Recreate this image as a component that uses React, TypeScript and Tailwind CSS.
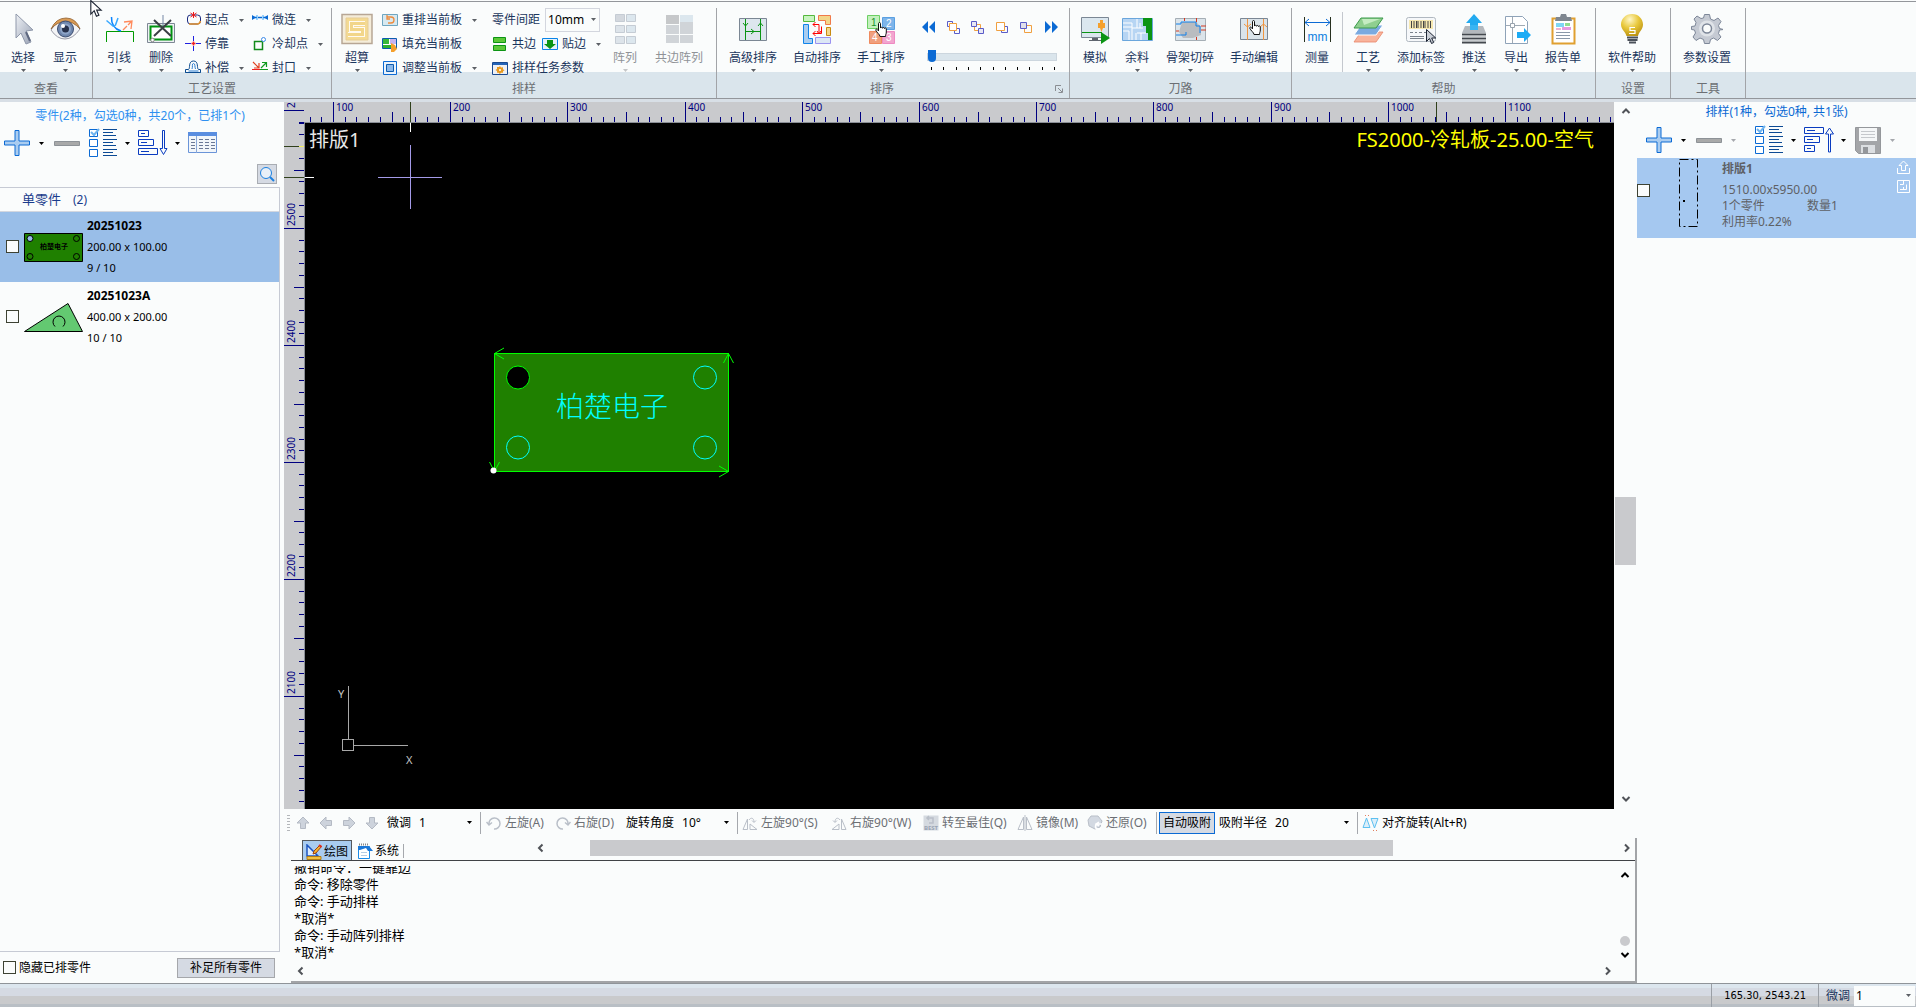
import React from 'react';

const S = ({ size = 32, children }: { size?: number; children: React.ReactNode }) => (
  <svg width={size} height={size} viewBox={`0 0 ${size} ${size}`} fill="none" className="shrink-0" aria-hidden="true">
    {children}
  </svg>
);

const Caret = ({ color = '#5c6066', className = '' }: { color?: string; className?: string }) => (
  <svg width="5" height="3" viewBox="0 0 5 3" className={`shrink-0 ${className}`} aria-hidden="true">
    <path d="M0 0h5L2.5 3z" fill={color} />
  </svg>
);

const Hand = ({ x, y }: { x: number; y: number }) => (
  <g transform={`translate(${x} ${y})`}>
    <path
      d="M3.5 1.5c0-1.3 2-1.3 2 0V6c0-1 2-1 2 .2 0-1 2-1 2 .3 0-.9 1.8-.8 1.8.4V10c0 2-.8 2.500-.8 4.500H5C5 12.500 1.500 10.500.8 8.200.5 7 1.800 6.800 2.500 7.700l1 1.200z"
      fill="#fff"
      stroke="#111"
      strokeWidth="1"
    />
  </g>
);

const Pointer = ({ x, y, fill = '#fff' }: { x: number; y: number; fill?: string }) => (
  <path transform={`translate(${x} ${y})`} d="M.5.500v12l3-3 2 5 2.200-1-2-4.500h4z" fill={fill} stroke="#1c2433" strokeWidth="1" />
);

/* ---- large ribbon icons, 32 x 32 ---- */
const big = {
  select: (
    <S>
      <defs>
        <linearGradient id="arrowFill" x1="0" y1="0" x2="1" y2="1">
          <stop offset="0" stopColor="#eef1f5" />
          <stop offset="1" stopColor="#98a1b4" />
        </linearGradient>
      </defs>
      <path d="M9 1v24l5-5 5 11 5-2-5-11 7-1z" fill="url(#arrowFill)" stroke="#8f98aa" />
      <path d="M19 19l4 9" stroke="#5e6880" strokeWidth="2" />
    </S>
  ),
  eye: (
    <S>
      <path d="M2 17Q8 7 17 7t14 9Q24 26 16 26T2 17z" fill="#f3f4f6" stroke="#9a9ca8" />
      <path d="M2 16Q7 5 17 5t14 11Q24 8 16 8.500T2 16z" fill="#d99b55" stroke="#8f6030" strokeWidth=".8" />
      <circle cx="16.500" cy="16" r="8" fill="#6f87ad" stroke="#3c4d70" />
      <circle cx="16.500" cy="16" r="5.500" fill="#8ea5c8" />
      <circle cx="16.500" cy="16" r="3.500" fill="#26304a" />
      <circle cx="14" cy="13" r="2" fill="#fff" />
    </S>
  ),
  lead: (
    <S>
      <path d="M3.500 29V18.500h27V29" stroke="#009a00" />
      <path d="M8.500 4Q8 15 18 18" stroke="#0a84ff" strokeWidth="1.500" />
      <path d="M3.500 7.500l7 6M15 5l-2.500 7-2 1.500" stroke="#38a8ff" strokeWidth="1.500" />
      <path d="M20 17l4-4m1-1l3-3M21 9l8-1-1 8" stroke="#ff8a5c" strokeWidth="1.300" />
    </S>
  ),
  remove: (
    <S>
      <path d="M2.500 10.500h27v19h-27z" fill="#eef1f4" stroke="#7d8794" />
      <path d="M5.500 13.500h21v13h-21z" fill="#fff" stroke="#009410" strokeWidth="2" />
      <path d="M18 2v14" stroke="#7587a5" />
      <path d="M9 7l17 16M26 7L9 23" stroke="#3b3f45" strokeWidth="2" />
      <circle cx="7.500" cy="27" r="1.800" fill="#fff" stroke="#888" />
    </S>
  ),
  nest: (
    <S>
      <path d="M1 1.500h30v29H1z" fill="#f4ecd9" stroke="#b7a695" strokeWidth="1.500" />
      <path d="M5 5h22v22H5z" fill="#f4da92" stroke="#e6cd96" />
      <path d="M24 10.500H10.500v6h11v5H7" stroke="#fffaf0" strokeWidth="5" />
      <path d="M24 10.500H10.500v6h11v5H7" stroke="#f2d68a" strokeWidth="3" />
    </S>
  ),
  array: (
    <S>
      {[2, 13, 24].map((y, i) => (
        <g key={y} stroke="#c5ccd4" fill={i ? '#dde4ea' : '#d3d8de'}>
          <path d={`M6.500 ${y - 0.5}h9v7h-9z`} />
          <path d={`M17.500 ${y - 0.5}h9v7h-9z`} fill="#dce7ee" />
        </g>
      ))}
    </S>
  ),
  commonArray: (
    <S>
      <path d="M3 2h13v9H3z" fill="#c6c8ca" />
      <path d="M17 2h13v9H17z" fill="#dce7ee" />
      <path d="M17 9h13v3H17zM3 12h13v9H3zM17 12h13v9H17zM3 22h13v8H3zM17 22h13v8H17z" fill="#d0d4d8" />
    </S>
  ),
  advSort: (
    <S>
      <path d="M2.500 5.500h27v22h-27z" fill="#dde6ee" stroke="#7b8794" />
      <path d="M8.500 6v21M23.500 6v21M8.500 18.500h15" stroke="#0a9414" />
      <path d="M6 10l2.500 3 2.500-3M21 13l2.500-3 2.500 3M14 16l3 2.500-3 2.500" stroke="#0a9414" />
    </S>
  ),
  autoSort: (
    <S>
      <path d="M2.500 2.500h11v6h-11z" fill="#c8f5c0" stroke="#55b83d" />
      <path d="M17.500 2.500h12v9h-5v-4h-7z" fill="#f3d68a" stroke="#f07a4a" />
      <path d="M2.500 11.500h5v14h4v5h-9z" fill="#a9cdf0" stroke="#1084ea" />
      <path d="M25.500 14.500h4v8h-4z" fill="#f3d68a" stroke="#c88a10" />
      <path d="M14.500 24.500h15v6h-15z" fill="#dce7f5" stroke="#9a92f0" />
      <path d="M12 11.500h6v9M20.500 13.500v7H12M14.500 9L12 11.500l2.500 2.500M14.500 18L12 20.500l2.500 2.500M16 18l2 3 2-3" stroke="#f00" />
    </S>
  ),
  manualSort: (
    <S>
      <path d="M2.500 2.500h12v13h-12z" fill="#c3f0bd" stroke="#6ccf63" />
      <path d="M17.500 4.500h12v12h-12z" fill="#7eb5ea" stroke="#5aa0e2" />
      <path d="M4.500 18.500h12v12h-12z" fill="#f0a07e" stroke="#ef8a5e" />
      <path d="M17.500 18.500h12v12h-12z" fill="#f2a5cf" stroke="#ee8ac2" />
      <g fontFamily="Liberation Sans, sans-serif" fontSize="10">
        <text x="6" y="13" fill="#15902a">1</text>
        <text x="21" y="14" fill="#fff">2</text>
        <text x="7" y="28" fill="#fff">4</text>
        <text x="21" y="28" fill="#fff">3</text>
      </g>
      <Hand x={10} y={9} />
    </S>
  ),
  simulate: (
    <S>
      <path d="M2.500 4.500h27v20h-27z" fill="#dbe7ef" stroke="#7b8794" />
      <path d="M3 19.500h20" stroke="#0a9414" />
      <path d="M21 7h3v3h2v5h-2l-1.500 4L21 15h-2v-5h2z" fill="#f5a02c" />
      <path d="M13 25h6v2h3v1H10v-1h3z" fill="#5e656e" />
      <path d="M22 19l9 6-9 6z" fill="#0a9414" />
    </S>
  ),
  remnant: (
    <S>
      <path d="M1.500 5.500h30v22h-30z" fill="#b7d5f3" stroke="#6aa6dc" />
      <path d="M2 10h9v5h5V6M2 18h6v9M2 14h9M11 15v12M16 15h6M16 20h9M19 10v5M15 20v7M20 20v7" stroke="#fff" />
      <path d="M22 5h9v22h-4v-7h-2v-7h-3z" fill="#0a9414" />
    </S>
  ),
  skeleton: (
    <S>
      <path d="M1.500 5.500h30v22h-30z" fill="#dbe4ea" stroke="#a5aeb5" />
      <path d="M8 9h14l5 5v8l-8 3H9l-4-6z" fill="#b9bcc0" />
      <path d="M2 11h5V9h15v4h4v7M2 22h10v-3" stroke="#1080ea" />
      <path d="M10.500 5v3M22.500 5v4M27 13h5M27 17h5M22.500 24v3M2 18h3" stroke="#d23a22" />
    </S>
  ),
  manualEdit: (
    <S>
      <path d="M2.500 5.500h27v21h-27z" fill="#dbe4ea" stroke="#7b8794" />
      <path d="M9.500 6v21M25.500 6v21M6 11l3.500 3 3.500-3M22 14l3.500-3 3.500 3" stroke="#ef9540" />
      <Hand x={11} y={7} />
    </S>
  ),
  measure: (
    <S>
      <path d="M3.500 4v25M29.500 4v25" stroke="#26301f" />
      <path d="M4 9.500h25M8 6l-4 3.500L8 13M25 6l4 3.500-4 3.500" stroke="#0b6ad4" />
      <text x="16.500" y="28" textAnchor="middle" fontFamily="Liberation Sans, sans-serif" fontSize="12" fill="#0a80e0">
        mm
      </text>
    </S>
  ),
  process: (
    <S>
      <path d="M9 19h22l-7 10H2z" fill="#f9b49c" stroke="#e9866a" strokeWidth=".8" />
      <path d="M9 12h22l-7 10H2z" fill="#7aaae0" stroke="#fff" />
      <path d="M9 5h22l-7 10H2z" fill="#8fcf8f" stroke="#3b9a4a" />
      <path d="M10 6h18L12 12z" fill="#c5ecc2" />
    </S>
  ),
  tag: (
    <S>
      <rect x="1.500" y="4.500" width="29" height="24" rx="2" fill="#f6f8fa" stroke="#b0b8c0" />
      <path d="M4 7h24v9H4z" fill="#f6e8b0" />
      <path d="M6.500 8v7M9 8v7M11.500 8v7M13 8v7M16 8v7M18.500 8v7M20 8v7M23 8v7M25.500 8v7" stroke="#444" />
      <path d="M5 19.500h3M10 19.500h2M14 19.500h3M19 19.500h3M5 23.500h14M5 25.500h14" stroke="#7a828c" />
      <Pointer x={21} y={16} fill="#c9ced6" />
    </S>
  ),
  push: (
    <S>
      <path d="M16 1l8 9h-4v8h-8v-8H8z" fill="#22aaf0" />
      <path d="M7 13h18l3 7H4z" fill="#b3b8bd" />
      <path d="M12 12h8v5h-8z" fill="#39b4f2" />
      <path d="M4 21.500h24M4 25.500h24M4 29.500h24" stroke="#43484e" strokeWidth="2" />
      <path d="M4 23.500h24M4 27.500h24" stroke="#c6cacd" strokeWidth="1.500" />
    </S>
  ),
  exportFile: (
    <S>
      <path d="M5.500 3.500h17l5 5v22h-22z" fill="#fff" stroke="#8fa3b8" />
      <path d="M12.500 4v26M6 12.500h19" stroke="#a0aab4" />
      <path d="M10.500 10.500h4v4h-4z" fill="#fff" stroke="#9aa4ae" />
      <path d="M17 19h7v-4l7 7-7 7v-4h-7z" fill="#1cabf5" />
    </S>
  ),
  report: (
    <S>
      <path d="M5.500 5.500h22v25h-22z" fill="#fff" stroke="#e0a030" strokeWidth="2" />
      <path d="M14 1h5l1 3h4l1 4H8l1-4h4z" fill="#7f8790" />
      <path d="M9 10h8v4H9z" fill="#7fd6f5" />
      <path d="M18 10h5v3h-5z" fill="#90dc90" />
      <path d="M9 15h5v2H9z" fill="#f0b0d0" />
      <path d="M15 14h9v3h-9z" fill="#e59ae0" />
      <path d="M9 19.500h14M9 22.500h14M9 25.500h14" stroke="#8a98a8" />
    </S>
  ),
  bulb: (
    <S>
      <defs>
        <radialGradient id="bulbFill" cx=".4" cy=".25" r=".8">
          <stop offset="0" stopColor="#fff7c8" />
          <stop offset=".5" stopColor="#e8c83c" />
          <stop offset="1" stopColor="#b98f10" />
        </radialGradient>
      </defs>
      <path d="M16 1c6.500 0 11 5 11 10.500 0 5-4 7-5 11.500H10.500C9.500 18.500 5 16.500 5 11.500 5 6 9.500 1 16 1z" fill="url(#bulbFill)" />
      <path d="M19 14.500h-5v3h5v3h-6" stroke="#fff" strokeWidth="1.200" />
      <path d="M11 24.500h11M11.500 27h10M13 29.500h7" stroke="#4a505a" strokeWidth="1.800" />
    </S>
  ),
  gear: (
    <S>
      <g fill="#c5cad3" stroke="#7d8798">
        <path d="M13.500 1.500h5l1 4.500 3.500 1.500 4-2.500 3 3.500-2.500 4 1 3 4 1v0l-4 .5-1 3.500 2.500 3.500-3.500 3.500-4-2.500-3 1.500-1 4h-5l-1-4-3.500-1.500-4 2.500L2 24l2.500-4-1-3-3-.500v-3l3.500-.500 1-3.500L3 6l3-3 4 2.500L12.500 5z" />
      </g>
      <circle cx="16" cy="15.500" r="8" fill="#dfe3e8" />
      <circle cx="16" cy="15.500" r="4.500" fill="#fafcfc" stroke="#7d8798" strokeWidth="1.500" />
    </S>
  ),
};

/* ---- small ribbon icons, 16 x 16 ---- */
const small = {
  start: (
    <S size={16}>
      <rect x="2.500" y="3" width="13" height="9" rx="3" stroke="#1a2a80" />
      <path d="M4 12h9q2-.500 2.500-3" stroke="#e0902c" strokeWidth="1.500" />
      <path d="M5.500 1l6 4M11.500 1l-6 4M8.500 0v6" stroke="#f01818" />
    </S>
  ),
  dock: (
    <S size={16}>
      <path d="M0 7.500h6M11 7.500h5M8.500 0v5M8.500 10v5" stroke="#2020e0" />
      <path d="M6.500 7.500h4M8.500 5.500v4" stroke="#f02020" strokeWidth="1.500" />
    </S>
  ),
  offset: (
    <S size={16}>
      <path d="M.500 12.500h15M.500 9.500h3c2-1-.500-8.500 5-8.500s3 7.500 5 8.500h2v3H.500z" stroke="#0c4c90" />
      <path d="M3.500 11h10M7 9c1-2-.500-5.500 1.500-5.500S9.500 7 10.500 9" stroke="#2a7cd0" />
    </S>
  ),
  micro: (
    <S size={16}>
      <path d="M0 3l4 2.500L0 8zM16 3l-4 2.500L16 8z" fill="#0b6ad4" />
      <path d="M1 5.500h15" stroke="#0b6ad4" strokeWidth="1.500" strokeDasharray="4 1" />
      <path d="M5 3v5M11 3v5" stroke="#38a8ff" />
    </S>
  ),
  cool: (
    <S size={16}>
      <path d="M2.500 5.500h8v8h-8z" stroke="#128a1a" strokeWidth="1.500" />
      <circle cx="11.500" cy="3.500" r="2" fill="#fff" stroke="#3c8ae8" />
    </S>
  ),
  seal: (
    <S size={16}>
      <path d="M0 9.500h8" stroke="#f02020" />
      <path d="M8 9.500h8" stroke="#109a20" />
      <path d="M1 2l6 6M7 3v5H2" stroke="#e04020" strokeWidth="1.200" />
      <path d="M9 8l5-5M10 2.500h4.500V7" stroke="#109a20" strokeWidth="1.200" />
    </S>
  ),
  rearrange: (
    <S size={16}>
      <path d="M.500 2.500h15v11h-15z" fill="#d7e9f0" stroke="#6fa6c0" />
      <path d="M5 5h4a3 3 0 110 6H6M5 3v4h3" stroke="#ee8a3c" strokeWidth="1.300" />
    </S>
  ),
  fill: (
    <S size={16}>
      <path d="M.500 2.500h14v10h-14z" fill="#fff" stroke="#0b5cb0" />
      <path d="M1 3h6v5H1z" fill="#38b838" />
      <path d="M8 3h6v5H8z" fill="#c8b4f0" />
      <path d="M1 9h8v3H1z" fill="#2cb030" />
      <path d="M9 7l4 2 2 4-3 3H9z" fill="#f5a02c" />
    </S>
  ),
  adjust: (
    <S size={16}>
      <path d="M1.500 1.500h13v13h-13z" fill="#eaf3fb" stroke="#0b6ad4" />
      <path d="M4.500 4.500h7v7h-7z" fill="#8ab8ea" stroke="#0b5cb0" />
    </S>
  ),
  shareEdge: (
    <S size={16}>
      <path d="M1.500 1.500h12v5h-12zM1.500 9.500h12v5h-12z" fill="#5cc838" stroke="#0c9414" />
    </S>
  ),
  snapEdge: (
    <S size={16}>
      <path d="M.500 2.500h15v11h-15z" fill="#e6f2fb" stroke="#0a84e8" />
      <path d="M5 4h6v4h3l-6 5-6-5h3z" fill="#0a9414" />
    </S>
  ),
  taskParam: (
    <S size={16}>
      <path d="M.500 2.500h15v12h-15z" fill="#eef0f4" stroke="#1a4a90" />
      <path d="M1 3h14v2H1z" fill="#2464b8" />
      <path d="M8 6l1 1.500 2-.300v2l1.500 1-1.500 1v1.500H9L8 14l-1.500-1.300H5V11l-1.500-1L5 9V7h2z" fill="#e89a20" />
      <circle cx="8" cy="10" r="1" fill="#fff" />
    </S>
  ),
};

interface BigButtonProps {
  icon: React.ReactNode;
  label: string;
  width?: string;
  menu?: boolean;
  disabled?: boolean;
}

const BigButton: React.FC<BigButtonProps> = ({ icon, label, width = 'w-[42px]', menu = false, disabled = false }) => (
  <button disabled={disabled} className={`${width} h-[72px] pt-[5px] flex flex-col items-center shrink-0 ${disabled ? 'text-[#8f9297]' : 'text-[#1b365d]'}`}>
    {icon}
    <span className="mt-[5px] leading-4 whitespace-nowrap">{label}</span>
    {menu && <Caret color={disabled ? '#c4c6c8' : '#5c6066'} className="mt-[3px]" />}
  </button>
);

const SmallButton = ({ icon, label, menu = false }: { icon: React.ReactNode; label: string; menu?: boolean }) => (
  <button className="h-6 flex items-center text-[#1b365d] whitespace-nowrap">
    {icon}
    <span className="ml-1 leading-4">{label}</span>
    {menu && <Caret className="ml-2.5" />}
  </button>
);

const Group = ({ title, children, launcher = false, className = 'pl-1 pr-1.5' }: { title: string; children: React.ReactNode; launcher?: boolean; className?: string }) => (
  <section className="shrink-0 flex flex-col border-r border-[#a2a4a8]" aria-label={title}>
    <div className={`flex h-[72px] ${className}`}>{children}</div>
    <div className="flex items-center justify-center h-[18px] text-[#6c6f74]">
      <span className={`leading-4 ${launcher ? 'grow text-center pr-2' : ''}`}>{title}</span>
      {launcher && (
        <button aria-label="更多排序" className="mr-1.5">
          <svg width="8" height="8" viewBox="0 0 8 8" fill="none" stroke="#8a8d92">
            <path d="M.500 6V.500H6M3 3l4 4M7.500 3.500v4h-4" />
          </svg>
        </button>
      )}
    </div>
  </section>
);

const orderIcons = [
  { label: '最前', art: <path d="M7 1v12L1 7zM14 1v12L8 7z" fill="#0b6ad4" stroke="none" /> },
  { label: '前移', art: <><path d="M1.500 1.500h5v5h-5zM8.500 8.500h5v5h-5z" stroke="#5a5cc8" /><path d="M3.500 3.500h7v7h-7z" stroke="#f0a040" fill="#fff" /></> },
  { label: '后移', art: <><path d="M4.500 4.500h6v6h-6z" stroke="#f0a040" /><path d="M1.500 1.500h5v5h-5zM8.500 8.500h5v5h-5z" stroke="#5a5cc8" fill="#e8e8f5" /></> },
  { label: '置前', art: <><path d="M6.500 6.500h6v6h-6z" stroke="#5a5cc8" /><path d="M1.500 2.500h8v8h-8z" stroke="#f0a040" fill="#fff" /></> },
  { label: '置后', art: <><path d="M5.500 5.500h7v7h-7z" stroke="#f0a040" /><path d="M1.500 2.500h6v6h-6z" stroke="#5a5cc8" fill="#e0e0ea" /></> },
  { label: '最后', art: <path d="M1 1v12l6-6zM8 1v12l6-6z" fill="#0b6ad4" stroke="none" /> },
];

const Ribbon = () => (
  <header className="shrink-0 border-b-[3px] border-[#d8dfe6]">
    <div className="mt-px pt-1.5 h-[98px] border-t border-b border-[#93969b] flex bg-[linear-gradient(#fafcfc_70px,#dae5ec_70px)] overflow-hidden">
      <Group title="查看" className="pl-0.5 pr-1.5">
        <BigButton icon={big.select} label="选择" menu />
        <BigButton icon={big.eye} label="显示" menu />
      </Group>
      <Group title="工艺设置" className="pl-[5px] pr-2">
        <BigButton icon={big.lead} label="引线" menu />
        <BigButton icon={big.remove} label="删除" menu />
        <div className="ml-[3px]">
          <SmallButton icon={small.start} label="起点" menu />
          <SmallButton icon={small.dock} label="停靠" />
          <SmallButton icon={small.offset} label="补偿" menu />
        </div>
        <div className="ml-2">
          <SmallButton icon={small.micro} label="微连" menu />
          <SmallButton icon={small.cool} label="冷却点" menu />
          <SmallButton icon={small.seal} label="封口" menu />
        </div>
      </Group>
      <Group title="排样" className="pl-1 pr-[7px]">
        <BigButton icon={big.nest} label="超算" menu />
        <div className="ml-1">
          <SmallButton icon={small.rearrange} label="重排当前板" menu />
          <SmallButton icon={small.fill} label="填充当前板" />
          <SmallButton icon={small.adjust} label="调整当前板" menu />
        </div>
        <div className="ml-[15px]">
          <div className="h-6 flex items-center gap-[5px] text-[#1b365d]">
            <label htmlFor="gap">零件间距</label>
            <span className="relative">
              <select id="gap" className="block w-[55px] h-6 pl-0.5 appearance-none border border-[#d3d6de] bg-[#fafcfc] text-black">
                <option>10mm</option>
              </select>
              <Caret className="absolute right-1 top-2.5" />
            </span>
          </div>
          <div className="flex gap-1.5">
            <SmallButton icon={small.shareEdge} label="共边" />
            <SmallButton icon={small.snapEdge} label="贴边" menu />
          </div>
          <SmallButton icon={small.taskParam} label="排样任务参数" />
        </div>
        <div className="ml-[3px] flex gap-[3px]">
          <BigButton icon={big.array} label="阵列" menu disabled />
          <BigButton icon={big.commonArray} label="共边阵列" width="w-[60px]" disabled />
        </div>
      </Group>
      <Group title="排序" launcher className="pl-1 pr-2.5">
        <BigButton icon={big.advSort} label="高级排序" width="w-16" menu />
        <BigButton icon={big.autoSort} label="自动排序" width="w-16" />
        <BigButton icon={big.manualSort} label="手工排序" width="w-16" menu />
        <div className="ml-2 w-[138px] pt-3">
          <div className="flex justify-between">
            {orderIcons.map((item) => (
              <button key={item.label} aria-label={item.label}>
                <svg width="15" height="15" viewBox="0 0 15 15" fill="none">{item.art}</svg>
              </button>
            ))}
          </div>
          <input
            type="range"
            defaultValue={0}
            aria-label="排序进度"
            className="block mt-4 ml-1.5 w-[130px] h-3 appearance-none bg-transparent [&::-webkit-slider-runnable-track]:h-2 [&::-webkit-slider-runnable-track]:bg-[#dae5ec] [&::-webkit-slider-runnable-track]:border [&::-webkit-slider-runnable-track]:border-[#ccd6de] [&::-webkit-slider-thumb]:appearance-none [&::-webkit-slider-thumb]:w-2 [&::-webkit-slider-thumb]:h-3 [&::-webkit-slider-thumb]:-mt-1 [&::-webkit-slider-thumb]:bg-[#0b6ad4] [&::-webkit-slider-thumb]:rounded-b"
          />
          <div className="mt-1 ml-2.5 mr-1 flex justify-between">
            {Array.from({ length: 11 }, (_, i) => (
              <span key={i} className="w-px h-[3px] bg-black" />
            ))}
          </div>
        </div>
      </Group>
      <Group title="刀路" className="pl-1 pr-[5px]">
        <BigButton icon={big.simulate} label="模拟" />
        <BigButton icon={big.remnant} label="余料" menu />
        <BigButton icon={big.skeleton} label="骨架切碎" width="w-16" menu />
        <BigButton icon={big.manualEdit} label="手动编辑" width="w-16" />
      </Group>
      <Group title="帮助">
        <BigButton icon={big.measure} label="测量" />
        <span className="mx-1 mt-1 w-px h-[60px] bg-[#c4c8ce]" />
        <BigButton icon={big.process} label="工艺" menu />
        <BigButton icon={big.tag} label="添加标签" width="w-16" menu />
        <BigButton icon={big.push} label="推送" menu />
        <BigButton icon={big.exportFile} label="导出" menu />
        <BigButton icon={big.report} label="报告单" width="w-[52px]" menu />
      </Group>
      <Group title="设置">
        <BigButton icon={big.bulb} label="软件帮助" width="w-16" menu />
      </Group>
      <Group title="工具">
        <BigButton icon={big.gear} label="参数设置" width="w-16" />
      </Group>
    </div>
  </header>
);

/* ---- panel tool icons ---- */
const PlusIcon = () => (
  <svg width="26" height="26" viewBox="0 0 26 26" aria-hidden="true">
    <path d="M11 .500h4V11h10.500v4H15v10.500h-4V15H.500v-4H11z" fill="#a9ccf0" stroke="#0b6ad4" />
  </svg>
);

const MinusIcon = () => (
  <svg width="26" height="26" viewBox="0 0 26 26" aria-hidden="true">
    <path d="M.500 11.500h25v4H.500z" fill="#a8a9a9" stroke="#8d9297" />
  </svg>
);

const ChecklistIcon = () => (
  <svg width="28" height="30" viewBox="0 0 28 30" fill="none" aria-hidden="true">
    <path d="M.500 1.500h8v7h-8zM.500 11.500h8v7h-8zM.500 21.500h8v7h-8z" fill="#fff" stroke="#0b6ad4" />
    <path d="M2 4l3 3 5-6" stroke="#6fb4ee" strokeWidth="2" />
    <path d="M14 1.500h14M14 7.500h13M14 11.500h14M14 17.500h13M14 21.500h14M14 27.500h14" stroke="#0c4a94" />
    <path d="M14 4.500h10M14 14.500h10M14 24.500h10" stroke="#0c4a94" />
  </svg>
);

const SortIcon = ({ up = false }: { up?: boolean }) => (
  <svg width="30" height="26" viewBox="0 0 30 26" fill="none" stroke="#0a3cc0" aria-hidden="true">
    {up ? (
      <path d="M.500.500h19v6H.500zM.500 9.500h15v6H.500zM.500 18.500h10v6H.500zM3 3.500h8M3 12.500h6M3 21.500h4M24.500 25V7h-3L25.500 1l4 6h-3v18z" />
    ) : (
      <path d="M.500.500h10v6H.500zM.500 9.500h15v6H.500zM.500 18.500h19v6H.500zM3 3.500h4M3 12.500h6M3 21.500h8M24.500.500v18h-2.500l3.500 6 3.500-6h-2.500V.500z" />
    )}
  </svg>
);

const TableIcon = () => (
  <svg width="30" height="22" viewBox="0 0 30 22" fill="none" aria-hidden="true">
    <path d="M.500.500h28v20H.500z" fill="#f2f6fa" stroke="#6a94d8" />
    <path d="M0 0h29v4H0z" fill="#5a8ee0" />
    <path d="M3 7.500h4M3 10.500h4M3 13.500h4M3 16.500h4M11 7.500h4M11 10.500h4M11 13.500h4M11 16.500h4M17 7.500h4M17 10.500h4M17 13.500h4M17 16.500h4M23 7.500h4M23 10.500h4M23 13.500h4M23 16.500h4" stroke="#6a7896" />
    <path d="M8.500 4v17" stroke="#8aa8d8" />
  </svg>
);

const SaveIcon = () => (
  <svg width="26" height="27" viewBox="0 0 26 27" fill="none" aria-hidden="true">
    <path d="M.500.500h25v26h-22l-3-3z" fill="#a3a5a8" stroke="#94979b" />
    <path d="M4 1h18v13H4z" fill="#f5f7f8" />
    <path d="M6 4.500h14M6 7.500h14M6 10.500h14" stroke="#c5c8cc" />
    <path d="M6 18h14v8H6z" fill="#dcdfe2" />
    <path d="M8 20h5v6H8z" fill="#94979b" />
  </svg>
);

const Check = ({ label, id }: { label?: string; id: string }) => (
  <input id={id} type="checkbox" aria-label={label} className="appearance-none shrink-0 block size-[13px] border border-[#3d4233] bg-[#fafcfc] checked:bg-[#0b6ad4]" />
);

const PlateThumb = () => (
  <svg width="59" height="29" viewBox="0 0 59 29" className="shrink-0" aria-hidden="true">
    <path d="M.500.500h58v28H.500z" fill="#1f8000" stroke="#000" />
    <circle cx="6" cy="5.500" r="3" fill="#99bee8" stroke="#000" />
    <g fill="none" stroke="#000">
      <circle cx="52.500" cy="5.500" r="3" />
      <circle cx="6" cy="23.500" r="3" />
      <circle cx="52.500" cy="23.500" r="3" />
    </g>
    <text x="30" y="16" textAnchor="middle" fontSize="7" fontWeight="700" fill="#000">柏楚电子</text>
  </svg>
);

const TriangleThumb = () => (
  <svg width="59" height="29" viewBox="0 0 59 29" className="shrink-0" aria-hidden="true">
    <path d="M.500 28.500L44 .500l14.500 28z" fill="#63c971" stroke="#000" />
    <path d="M31 23.500a6 6 0 118 0" fill="none" stroke="#000" />
  </svg>
);

const parts = [
  { name: '20251023', size: '200.00 x 100.00', count: '9 / 10', thumb: <PlateThumb />, selected: true },
  { name: '20251023A', size: '400.00 x 200.00', count: '10 / 10', thumb: <TriangleThumb />, selected: false },
];

const PartsPanel = () => (
  <aside className="w-[280px] shrink-0 flex flex-col">
    <h2 className="mt-1 text-center leading-5 text-[#2e90f0]">零件(2种，勾选0种，共20个，已排1个)</h2>
    <div className="mt-0.5 ml-1 h-[30px] flex items-center">
      <button aria-label="添加零件"><PlusIcon /></button>
      <Caret color="#000" className="ml-[9px]" />
      <button aria-label="删除零件" className="ml-2.5"><MinusIcon /></button>
      <button aria-label="勾选" className="ml-[9px]"><ChecklistIcon /></button>
      <Caret color="#000" className="ml-2" />
      <button aria-label="排序" className="ml-2"><SortIcon /></button>
      <Caret color="#000" className="ml-[7px]" />
      <button aria-label="列表" className="ml-2"><TableIcon /></button>
    </div>
    <button aria-label="搜索" className="mt-1.5 mr-[3px] self-end size-5 border border-[#a9adb3] bg-[#d5dae3] flex items-center justify-center">
      <svg width="16" height="16" viewBox="0 0 16 16" fill="none" stroke="#1a80e0">
        <circle cx="7" cy="7" r="5.500" fill="#e8f0f8" />
        <path d="M11 11l4 4" strokeWidth="2" />
      </svg>
    </button>
    <div className="mt-[3px] grow border-t border-r border-b border-[#c6cad4]">
      <h3 className="h-6 pl-[22px] flex items-center gap-3 border-b border-[#d3d7df] text-[13px] text-[#1a3c8c]">
        <span>单零件</span>
        <span className="text-xs">(2)</span>
      </h3>
      <ul>
        {parts.map((part) => (
          <li key={part.name} className={`h-[70px] pl-1.5 pb-0.5 flex items-center ${part.selected ? 'bg-[#99bee8]' : ''}`}>
            <Check id={part.name} label={part.name} />
            <span className="ml-[5px] mt-0.5">{part.thumb}</span>
            <div className="ml-1 text-[11px] leading-[21px] text-black">
              <p className="text-xs leading-[21px] font-bold">{part.name}</p>
              <p>{part.size}</p>
              <p>{part.count}</p>
            </div>
          </li>
        ))}
      </ul>
    </div>
    <div className="h-[31px] shrink-0 pl-[3px] pr-[5px] flex items-center justify-between text-black">
      <span className="flex items-center gap-[3px]">
        <Check id="hide-nested" />
        <label htmlFor="hide-nested">隐藏已排零件</label>
      </span>
      <button className="w-[98px] h-5 border border-[#a5a7ab] bg-[#d5dae3] leading-4">补足所有零件</button>
    </div>
  </aside>
);

const UNIT = 117.2;

const TopRuler = () => {
  const ticks = Array.from({ length: 114 }, (_, i) => i - 2);
  return (
    <svg className="block w-full h-[21px] bg-[#c9cacd]" shapeRendering="crispEdges" aria-hidden="true">
      {ticks.map((t) => {
        const x = Math.round(49 + (t * UNIT) / 10) + 0.5;
        const top = t % 10 === 0 ? 0 : t % 5 === 0 ? 10 : 15;
        return <path key={t} d={`M${x} ${top}V20`} stroke="#000080" />;
      })}
      {Array.from({ length: 11 }, (_, i) => (
        <text key={i} x={Math.round(52 + i * UNIT)} y="9" fontSize="10" fill="#000080">{(i + 1) * 100}</text>
      ))}
      <text transform="translate(11 6) rotate(-90)" fontSize="10" fill="#000080">2</text>
      <path d="M0 8.500H20M15 20.500H20" stroke="#000080" />
      <path d="M126.500 0V21M1152.500 0V21" stroke="#30401c" />
      <path d="M20 20.500H4000" stroke="#8a8e96" />
    </svg>
  );
};

const SideRuler = () => {
  const ticks = Array.from({ length: 80 }, (_, i) => i);
  return (
    <svg className="block w-[21px] h-full shrink-0 bg-[#c9cacd]" shapeRendering="crispEdges" aria-hidden="true">
      {ticks.map((t) => {
        const y = Math.round(-12 + t * 11.7) + 0.5;
        const left = t % 10 === 0 ? 0 : t % 5 === 0 ? 10 : 15;
        return <path key={t} d={`M${left} ${y}H20`} stroke="#000080" />;
      })}
      {[2500, 2400, 2300, 2200, 2100].map((n, i) => (
        <text key={n} transform={`translate(11 ${103 + i * 117}) rotate(-90)`} fontSize="10" fill="#000080">{n}</text>
      ))}
      <path d="M0 23.500H15M0 54.500H21" stroke="#30401c" />
      <path d="M15 23.500H20" stroke="#f5f060" />
      <path d="M20.500 0V4000" stroke="#8a8e96" />
    </svg>
  );
};

const Drawing = () => (
  <svg className="block grow h-full bg-black" role="img" aria-label="排版1">
    <text x="4" y="24" fontSize="20" fill="#e8e8e8">排版1</text>
    <text x="100%" y="24" dx="-20" textAnchor="end" fontSize="20" fill="#ffff00">FS2000-冷轧板-25.00-空气</text>
    <g shapeRendering="crispEdges" fill="none">
      <path d="M105.500 0V9M0 54.500H9" stroke="#fff" />
      <path d="M105.500 22V86M73 54.500H137" stroke="#a49ae8" />
      <path d="M189.500 230.500h234v118h-234z" fill="#1f8000" stroke="#00ff00" />
    </g>
    <g fill="none" stroke="#00ff00">
      <path d="M199 225l-9.500 5.500L199 236M418.500 240l5-9.500 5 9.500M414 343l9.500 5.500L414 354M184.500 339l5 9.500 5-9.500" />
      <circle cx="213" cy="254.500" r="11.500" fill="#000" />
    </g>
    <g fill="none" stroke="#00ffff">
      <circle cx="400" cy="254.500" r="11.500" />
      <circle cx="213" cy="324.500" r="11.500" />
      <circle cx="400" cy="324.500" r="11.500" />
    </g>
    <text x="307" y="294" textAnchor="middle" fontSize="28" fontWeight="300" fill="#00ffff">柏楚电子</text>
    <circle cx="188.500" cy="347.500" r="3" fill="#fff" />
    <svg x="0" y="100%" overflow="visible">
      <g fill="none" stroke="#a8a8a8" shapeRendering="crispEdges">
        <path d="M43.500-123V-70M49-63.500H103M37.500-69.500h11v11h-11z" />
      </g>
      <text x="33" y="-111" fontSize="11" fill="#c4c4c4">Y</text>
      <text x="101" y="-45" fontSize="11" fill="#c4c4c4">X</text>
    </svg>
  </svg>
);

const chevrons = {
  up: 'M1.500 6L5 2.500 8.500 6',
  down: 'M1.500 3L5 6.500 8.500 3',
  left: 'M6.500 1.500L3 5l3.500 3.500',
  right: 'M3 1.500L6.500 5 3 8.500',
};

const ScrollButton = ({ dir, color = '#505358', className = '' }: { dir: keyof typeof chevrons; color?: string; className?: string }) => (
  <button aria-label={dir} className={`shrink-0 flex items-center justify-center ${className}`}>
    <svg width="10" height="10" viewBox="0 0 10 10" fill="none" stroke={color} strokeWidth="2">
      <path d={chevrons[dir]} />
    </svg>
  </button>
);

const NudgeButton = ({ rotate, label }: { rotate: string; label: string }) => (
  <button aria-label={label}>
    <svg width="14" height="14" viewBox="0 0 14 14" className={rotate}>
      <path d="M7 1l6 6H9.500v5.500h-5V7H1z" fill="#cdd3dc" stroke="#b4bac4" />
    </svg>
  </button>
);

const ToolItem = ({ icon, label, className }: { icon: React.ReactNode; label: string; className: string }) => (
  <button className={`flex items-center gap-[3px] text-[#6c6f74] whitespace-nowrap shrink-0 ${className}`}>
    <svg width="16" height="16" viewBox="0 0 16 16" fill="none" stroke="#b9bfc8" className="shrink-0">{icon}</svg>
    {label}
  </button>
);

const ToolSelect = ({ id, label, value, className }: { id: string; label: string; value: string; className: string }) => (
  <span className="flex items-center text-black whitespace-nowrap shrink-0">
    <label htmlFor={id}>{label}</label>
    <span className="relative ml-2">
      <select id={id} className={`block h-5 appearance-none bg-transparent ${className}`}>
        <option>{value}</option>
      </select>
      <Caret color="#000" className="absolute right-1 top-2" />
    </span>
  </span>
);

const Divider = ({ className = '' }: { className?: string }) => <span className={`w-px h-[22px] shrink-0 bg-[#a5a8ad] ${className}`} />;

const EditToolbar = () => (
  <div className="h-[29px] pl-[3px] pb-0.5 flex items-center shrink-0 overflow-hidden">
    <span className="w-[3px] h-4 bg-[repeating-linear-gradient(#b4b7bb_0_1px,transparent_1px_3px)]" />
    <div className="ml-1.5 mr-2 flex gap-[9px]">
      <NudgeButton label="上移" rotate="" />
      <NudgeButton label="左移" rotate="-rotate-90" />
      <NudgeButton label="右移" rotate="rotate-90" />
      <NudgeButton label="下移" rotate="rotate-180" />
    </div>
    <ToolSelect id="nudge" label="微调" value="1" className="w-[57px]" />
    <Divider className="ml-1" />
    <ToolItem className="ml-[5px] w-[69px]" label="左旋(A)" icon={<path d="M3 9a5.500 5.500 0 1 1 5 5M.500 7L3 10l3-2.500" strokeWidth="1.500" />} />
    <ToolItem className="w-[71px]" label="右旋(D)" icon={<path d="M13 9a5.500 5.500 0 1 0-5 5M15.500 7L13 10l-3-2.500" strokeWidth="1.500" />} />
    <ToolSelect id="angle" label="旋转角度" value="10°" className="w-[51px]" />
    <Divider className="ml-1" />
    <ToolItem className="ml-1 w-[89px]" label="左旋90°(S)" icon={<path d="M1 14.500L5.500 4v10.500zM8 14.500V9l7 5.500zM7 5c2-3 5-2 5 2M10 5.500l2 2 2-2" />} />
    <ToolItem className="w-[92px]" label="右旋90°(W)" icon={<path d="M15 14.500L10.500 4v10.500zM8 14.500V9l-7 5.500zM9 5C7 2 4 3 4 7M2 5.500l2 2 2-2" />} />
    <ToolItem
      className="w-[94px]"
      label="转至最佳(Q)"
      icon={
        <>
          <path d="M.500.500h15v15H.500z" fill="#d5dae0" stroke="none" />
          <path d="M5 3h5v5H6M6 1L4 3l2 2" strokeWidth="1.500" />
          <text x="8" y="15" textAnchor="middle" fontSize="6" fontWeight="700" fill="#9aa4b4" stroke="none">BEST</text>
        </>
      }
    />
    <ToolItem className="w-[70px]" label="镜像(M)" icon={<path d="M1 14.500L6.500 2v12.500zM15 14.500L9.500 2v12.500zM8 0v16" />} />
    <ToolItem
      className="w-[69px]"
      label="还原(O)"
      icon={
        <>
          <path d="M4 1h7l4 5-2 6-5 2-6-3-1-6z" fill="#d3d9e2" />
          <path d="M15 9h-4a2.500 2.500 0 000 5h3M12 7l-3 2 3 2" stroke="#fff" strokeWidth="1.500" />
        </>
      }
    />
    <Divider />
    <button aria-pressed="true" className="ml-0.5 mr-1 w-14 h-[22px] shrink-0 border border-[#0b6ad4] bg-[#d5dae3] text-black whitespace-nowrap">自动吸附</button>
    <ToolSelect id="snap" label="吸附半径" value="20" className="w-[78px]" />
    <Divider className="ml-1" />
    <button className="ml-1 flex items-center gap-[3px] text-black whitespace-nowrap">
      <svg width="17" height="16" viewBox="0 0 17 16" fill="#dbeefa" stroke="#5cc0f0">
        <path d="M1 12.500L4.500 3 8 12.500zM9 3.500h7L12.500 13z" />
        <path d="M3 .500h1M6 .500h1M11 15.500h1M14 15.500h1" stroke="#e08060" />
      </svg>
      对齐旋转(Alt+R)
    </button>
  </div>
);

const logLines = ['撤销命令：一键靠边', '命令: 移除零件', '命令: 手动排样', '*取消*', '命令: 手动阵列排样', '*取消*'];

const LogPanel = () => (
  <div className="h-[145px] shrink-0 ml-[7px] flex flex-col border-r-2 border-b-2 border-[#a2a4a7]">
    <div className="h-[23px] shrink-0 flex items-end border-b border-[#404246] text-black">
      <button className="ml-[11px] w-[50px] h-5 pl-[3px] pt-0.5 flex items-center gap-0.5 border border-b-0 border-[#55585c] bg-[#a9ccf0]">
        <S size={16}>
          <path d="M1 1v11h11z" fill="#dcecff" stroke="#1c54c0" strokeWidth="1.500" />
          <path d="M1 12.500h14v3H1z" fill="#f0c040" stroke="#b07c18" />
          <path d="M7 10l1-3 6-6 1.500 1.500L10 9z" fill="#f2b430" stroke="#a04010" />
          <path d="M13 1l2.500 2" stroke="#e03020" strokeWidth="2" />
        </S>
        绘图
      </button>
      <button className="ml-[5px] h-5 pt-0.5 flex items-center gap-0.5">
        <S size={16}>
          <path d="M1.500 3.500h11v12h-11z" fill="#fff" stroke="#1c8ce8" />
          <path d="M1 3h11l4 5h-5L9 5 3 7H1z" fill="#1c78d8" />
          <path d="M2 1.500h10" stroke="#888" strokeDasharray="1 1" strokeWidth="2" />
          <path d="M4 9.500h6M4 12.500h6" stroke="#b5cde4" />
        </S>
        系统
      </button>
      <span className="ml-1 mb-0.5 w-px h-[14px] bg-[#a5a8ad]" />
      <div className="ml-[129px] mb-1 h-4 grow flex items-center">
        <ScrollButton dir="left" className="w-4 h-4" />
        <div className="grow-[41] basis-0" />
        <div className="grow-[803] basis-0 h-4 bg-[#c9cacd]" />
        <div className="grow-[226] basis-0" />
        <ScrollButton dir="right" className="w-4 h-4" />
      </div>
    </div>
    <div className="grow flex min-h-0">
      <div className="grow flex flex-col">
        <div className="mt-[5px] h-[97px] pl-[3px] flex flex-col justify-end overflow-hidden text-[13px] text-black">
          {logLines.map((line, i) => (
            <p key={i} className="shrink-0 leading-[17px]">{line}</p>
          ))}
        </div>
        <div className="h-5 pl-1 flex justify-between">
          <ScrollButton dir="left" className="w-3" />
          <ScrollButton dir="right" className="w-3" />
        </div>
      </div>
      <div className="w-[21px] pt-[9px] pb-5 flex flex-col items-center justify-between">
        <ScrollButton dir="up" color="#000" className="h-3" />
        <div className="flex flex-col items-center gap-[3px]">
          <span className="size-[10px] rounded-full bg-[#c9cacd]" />
          <ScrollButton dir="down" color="#000" className="h-3" />
        </div>
      </div>
    </div>
  </div>
);

const Workspace = () => (
  <main className="grow min-w-0 ml-1 flex flex-col">
    <div className="grow min-h-0 flex">
      <div className="grow min-w-0 flex flex-col">
        <TopRuler />
        <div className="grow min-h-0 flex">
          <SideRuler />
          <Drawing />
        </div>
      </div>
      <div className="w-[23px] shrink-0 flex flex-col items-center">
        <ScrollButton dir="up" className="h-5" />
        <div className="grow-[375] basis-0" />
        <div className="w-[21px] h-[68px] shrink-0 bg-[#c9cacd]" />
        <div className="grow-[224] basis-0" />
        <ScrollButton dir="down" className="h-5" />
      </div>
    </div>
    <EditToolbar />
    <LogPanel />
  </main>
);

const SheetPanel = () => (
  <aside className="w-[279px] shrink-0">
    <h2 className="text-center leading-5 text-[#0b6ad4]">排样(1种，勾选0种, 共1张)</h2>
    <div className="mt-[3px] ml-[9px] h-[30px] flex items-center">
      <button aria-label="添加板材"><PlusIcon /></button>
      <Caret color="#000" className="ml-[9px]" />
      <button aria-label="删除板材" className="ml-2.5"><MinusIcon /></button>
      <Caret color="#a5a8ad" className="ml-[9px]" />
      <button aria-label="勾选板材" className="ml-[19px]"><ChecklistIcon /></button>
      <Caret color="#000" className="ml-2" />
      <button aria-label="板材排序" className="ml-2"><SortIcon up /></button>
      <Caret color="#000" className="ml-[7px]" />
      <button aria-label="保存" className="ml-[9px]"><SaveIcon /></button>
      <Caret color="#a5a8ad" className="ml-[9px]" />
    </div>
    <div className="mt-[3px] h-20 flex bg-[#a5c8f0] text-[#5e6166]">
      <span className="mt-[26px]"><Check id="sheet" label="排版1" /></span>
      <svg width="20" height="69" viewBox="0 0 20 69" fill="none" className="ml-7 mt-px" aria-hidden="true">
        <path d="M1.500.500h18v67h-18z" stroke="#000" strokeDasharray="9 3 2 3" />
        <path d="M5 41h2v2H5z" fill="#000" />
      </svg>
      <div className="ml-6 grow leading-4">
        <p className="mt-[3px] font-bold">排版1</p>
        <p className="mt-[5px]">1510.00x5950.00</p>
        <p className="flex">
          <span className="w-[85px]">1个零件</span>
          <span>数量1</span>
        </p>
        <p>利用率0.22%</p>
      </div>
      <div className="pt-0.5 pr-1.5 flex flex-col gap-1.5">
        <button aria-label="导出板材">
          <svg width="13" height="14" viewBox="0 0 13 14" fill="none" stroke="#fff">
            <path d="M.500 8v5.500h12V8M4.500 10.500v-5H2L6.500 1 11 5.500H8.500v5z" />
          </svg>
        </button>
        <button aria-label="查看板材">
          <svg width="13" height="14" viewBox="0 0 13 14" fill="none" stroke="#fff">
            <path d="M.500.500h12v12H.500zM3 4.500h3.500V1M3 9.500h6.500V4.500M6.500 7v2.500" />
          </svg>
        </button>
      </div>
    </div>
  </aside>
);

const StatusBar = () => (
  <footer className="h-6 shrink-0 border-t border-[#8f9499] flex justify-end bg-[linear-gradient(#dce6ee_4px,#d5dae3_4px_12px,#c9cacc_12px_20px,#b9bfc5_20px)] text-black">
    <div className="flex items-center border-l border-[#9a9fa6] px-3 pt-0.5 font-['DejaVu_Sans_Condensed','Noto_Sans',sans-serif] text-[11px]">165.30, 2543.21</div>
    <div className="flex items-center border-l border-[#9a9fa6] pl-[7px] pr-px">
      <label htmlFor="status-nudge" className="text-[#1b365d]">微调</label>
      <span className="relative ml-1">
        <select id="status-nudge" className="block w-[61px] h-5 pl-0.5 appearance-none bg-[#fafcfc] text-black">
          <option>1</option>
        </select>
        <Caret className="absolute right-1 top-2" />
      </span>
    </div>
  </footer>
);

const App = () => {
  return (
    <div className="relative h-screen flex flex-col overflow-hidden bg-[#fafcfc] text-xs font-['Noto_Sans','Noto_Sans_CJK_SC',sans-serif]">
      <Ribbon />
      <div className="grow min-h-0 flex">
        <PartsPanel />
        <Workspace />
        <SheetPanel />
      </div>
      <StatusBar />
      <svg width="14" height="18" viewBox="0 0 12 16" className="absolute left-[90px] top-0" aria-hidden="true">
        <Pointer x={0} y={0} />
      </svg>
    </div>
  );
};

export default App;
